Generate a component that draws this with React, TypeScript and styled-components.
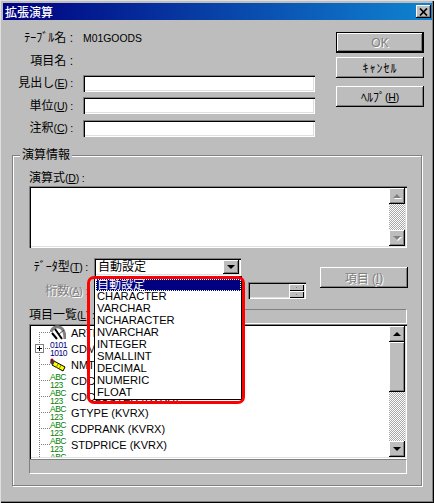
import React from 'react';
import styled, { createGlobalStyle, css } from 'styled-components';

const FACE = '#bdbdbd';

const GlobalStyle = createGlobalStyle`
	html, body {
		margin: 0;
		padding: 0;
		background: ${FACE};
	}
	body {
		font-family: "Liberation Sans", "Noto Sans CJK JP", sans-serif;
		font-size: 12px;
		color: #000;
	}
	* {
		box-sizing: border-box;
	}
`;

const sunken = css`
	box-shadow: inset 1px 1px 0 #808080, inset 2px 2px 0 #000, inset -1px -1px 0 #fff, inset -2px -2px 0 #dfdfdf;
`;
const raised = css`
	background: ${FACE};
	box-shadow: inset -1px -1px 0 #000, inset 1px 1px 0 #fff, inset -2px -2px 0 #808080;
`;
const disabledText = css`
	color: #808080;
	text-shadow: 1px 1px 0 #fff;
`;

const Dialog = styled.div`
	width: 434px;
	height: 503px;
	padding: 3px 2px 3px 3px;
	background: ${FACE};
	overflow: hidden;
	box-shadow: inset 1px 1px 0 #dfdfdf, inset -1px -1px 0 #000, inset -2px -2px 0 #808080;
`;

const TitleBar = styled.div`
	height: 17px;
	padding: 0 0 0 2px;
	display: flex;
	align-items: center;
	justify-content: space-between;
	background: linear-gradient(90deg, #000080 0%, #1084d0 100%);
	color: #fff;
	font-family: "Noto Sans CJK JP", sans-serif;
	font-weight: 500;
	font-size: 12px;
`;

const CloseButton = styled.div`
	${raised};
	width: 15px;
	height: 13px;
	margin-right: 1px;
	display: flex;
	align-items: center;
	justify-content: center;
`;

const TopSection = styled.div`
	height: 135px;
	display: flex;
`;

const Form = styled.div`
	width: 312px;
	padding-top: 7px;
	display: grid;
	grid-template-columns: 70px 232px;
	column-gap: 10px;
	grid-auto-rows: 22.5px;
	align-items: center;
`;

const FieldLabel = styled.div`
	text-align: right;
	white-space: nowrap;
	line-height: 14px;
`;

const Hotkey = styled.span`
	font-size: 10.5px;
	letter-spacing: -0.2px;
`;

const StaticValue = styled.div`
	font-size: 10.4px;
`;

const TextInput = styled.div`
	${sunken};
	height: 17px;
	background: #fff;
`;

const ButtonColumn = styled.div`
	margin-left: 21px;
	padding-top: 12px;
	width: 88px;
	display: flex;
	flex-direction: column;
`;

const PushButton = styled.div<{ $default?: boolean; $disabled?: boolean; $top?: number; $spacing?: number }>`
	${raised};
	height: 21px;
	margin-top: ${({ $top }) => $top ?? 0}px;
	letter-spacing: ${({ $spacing }) => $spacing ?? 0}px;
	display: flex;
	align-items: center;
	justify-content: center;
	white-space: nowrap;
	${({ $disabled }) => $disabled && disabledText};
	${({ $default }) =>
		$default &&
		css`
			box-shadow: inset 0 0 0 1px #000, inset -2px -2px 0 #000, inset 2px 2px 0 #fff, inset -3px -3px 0 #808080;
		`};
`;

const GroupBox = styled.div`
	position: relative;
	width: 410px;
	height: 331px;
	margin-left: 9px;
	padding: 14px 0 0 16px;
	border: 1px solid #808080;
	box-shadow: inset 1px 1px 0 #fff, 1px 1px 0 #fff;
`;

const GroupTitle = styled.div`
	position: absolute;
	top: -8px;
	left: 7px;
	padding: 0 2px;
	background: ${FACE};
	line-height: 15px;
`;

const SectionLabel = styled.div`
	height: 16px;
	line-height: 16px;
`;

const FormulaBox = styled.div`
	${sunken};
	width: 378px;
	height: 62px;
	padding: 2px;
	background: #fff;
	display: flex;
	justify-content: flex-end;
`;

const ScrollBar = styled.div`
	width: 16px;
	display: flex;
	flex-direction: column;
	flex-shrink: 0;
	background: repeating-conic-gradient(#fff 0 25%, #a8a8a8 0 50%) 0 0 / 2px 2px;
`;

const ScrollButton = styled.div`
	${raised};
	height: 16px;
	flex-shrink: 0;
	display: flex;
	align-items: center;
	justify-content: center;
`;

const ScrollThumb = styled.div`
	${raised};
	height: 50px;
	flex-shrink: 0;
`;

const ScrollTrack = styled.div`
	flex: 1;
`;

const Arrow = styled.span<{ $down?: boolean; $disabled?: boolean }>`
	width: 0;
	height: 0;
	border-left: 4px solid transparent;
	border-right: 4px solid transparent;
	${({ $down, $disabled }) => {
		const color = $disabled ? '#808080' : '#000';
		return $down ? `border-top: 4px solid ${color};` : `border-bottom: 4px solid ${color};`;
	}};
	${({ $disabled }) => $disabled && 'filter: drop-shadow(1px 1px 0 #fff);'};
`;

const TypeGrid = styled.div`
	margin-top: 10px;
	display: grid;
	grid-template-columns: 65px 154px 58px 14px 88px;
	grid-template-rows: 24px 27px;
`;

const GridLabel = styled.div<{ $disabled?: boolean; $row: number }>`
	grid-column: 1;
	grid-row: ${({ $row }) => $row};
	height: 18px;
	padding-right: 6px;
	line-height: 18px;
	text-align: right;
	white-space: nowrap;
	${({ $disabled }) => $disabled && disabledText};
`;

const ComboWrap = styled.div`
	position: relative;
	grid-column: 2;
	grid-row: 1;
	width: 147px;
	height: 18px;
`;

const ComboField = styled.div`
	${sunken};
	height: 18px;
	padding: 2px 2px 2px 4px;
	background: #fff;
	display: flex;
	align-items: center;
	justify-content: space-between;
	line-height: 14px;
`;

const ComboButton = styled(ScrollButton)`
	width: 16px;
	height: 14px;
`;

const DropList = styled.div`
	position: absolute;
	top: 18px;
	left: 0;
	width: 148px;
	height: 124px;
	padding: 2px 0 0 1px;
	background: #fff;
	border: 1px solid #000;
	z-index: 2;
`;

const DropItem = styled.div<{ $selected?: boolean }>`
	height: 12px;
	padding-left: 1px;
	font-size: 11.2px;
	line-height: 11px;
	white-space: nowrap;
	${({ $selected }) =>
		$selected &&
		css`
			background: #000080;
			color: #fff;
			outline: 1px dotted #fff;
			outline-offset: -1px;
			font-size: 12px;
			line-height: 12px;
		`};
`;

const Highlight = styled.div`
	position: absolute;
	top: 18px;
	left: -7px;
	width: 158px;
	height: 128px;
	border: 3px solid #ff0000;
	border-radius: 7px;
	z-index: 3;
`;

const SpinBox = styled.div`
	${sunken};
	grid-column: 3;
	grid-row: 2;
	height: 17px;
	padding: 2px 2px 1px;
	display: flex;
	flex-direction: column;
	align-items: flex-end;
`;

const SpinButton = styled.div`
	background: ${FACE};
	box-shadow: inset 1px 1px 0 #fff, inset -1px -1px 0 #000;
	width: 15px;
	height: 7px;
	display: flex;
	align-items: center;
	justify-content: center;
	&::after {
		content: '';
		width: 1px;
		height: 1px;
		background: #808080;
	}
`;

const ItemButton = styled(PushButton)`
	grid-column: 5;
	grid-row: 1 / 3;
`;

const ListHeader = styled.div`
	height: 15px;
	width: 378px;
	display: flex;
`;

const ListLabel = styled.div`
	line-height: 13px;
	width: 120px;
	white-space: nowrap;
`;

const HeaderStrip = styled.div`
	flex: 1;
	border-top: 1px solid #808080;
	border-right: 1px solid #fff;
	border-bottom: 1px solid #fff;
`;

const ListBox = styled.div`
	${sunken};
	width: 378px;
	height: 135px;
	padding: 2px;
	background: #fff;
	display: flex;
`;

const TreeBody = styled.div`
	position: relative;
	flex: 1;
	margin-top: -1px;
	overflow: hidden;
	&::before {
		content: '';
		position: absolute;
		left: 8px;
		top: 7px;
		bottom: 0;
		border-left: 1px dotted #808080;
	}
`;

const TreeRow = styled.div`
	position: relative;
	height: 16px;
	padding-left: 19px;
	display: flex;
	align-items: center;
	white-space: nowrap;
	font-size: 11px;
	&::before {
		content: '';
		position: absolute;
		left: 8px;
		top: 7px;
		width: 11px;
		border-top: 1px dotted #808080;
	}
`;

const IconSlot = styled.div`
	width: 16px;
	height: 16px;
	margin-right: 5px;
	flex-shrink: 0;
	display: flex;
	align-items: center;
	justify-content: center;
`;

const StackIcon = styled.div<{ $color: string }>`
	width: 16px;
	color: ${({ $color }) => $color};
	font-size: 8.5px;
	line-height: 8px;
	letter-spacing: -0.5px;
	white-space: nowrap;
`;

const Expander = styled.svg`
	position: absolute;
	left: 4px;
	top: 3px;
`;

const FooterStrip = styled.div`
	width: 378px;
	height: 15px;
	border: 1px solid #808080;
	border-right-color: #fff;
	border-bottom-color: #fff;
`;

const LinkIcon = () => (
	<svg width="16" height="16" viewBox="0 0 16 16" fill="none">
		<path d="M1 7C2 3 6 1 9 2C13 3 15 8 15 14" stroke="#808080" strokeWidth="3" />
		<path d="M5 4L12 14M2 8L7 14" stroke="#000" strokeWidth="2" />
		<path d="M9 9L14 5" stroke="#404040" strokeWidth="1" />
	</svg>
);

const CrayonIcon = () => (
	<svg width="16" height="16" viewBox="0 0 16 16" fill="none">
		<path d="M4 4L15 10L13 14L2 8Z" fill="#ffff00" stroke="#000" strokeWidth="1" />
		<path d="M1 2L5 4L3 8L0 6Z" fill="#404040" />
		<circle cx="2" cy="3" r="1.5" fill="#a00000" />
		<path d="M8 7L6 11M11 8L9 12" stroke="#808000" strokeWidth="1" />
	</svg>
);

const ItemIcon = ({ kind }: { kind: string }) => {
	if (kind === 'link') return <LinkIcon />;
	if (kind === 'crayon') return <CrayonIcon />;
	if (kind === 'binary') {
		return (
			<StackIcon $color="#000080">
				0101
				<br />
				1010
			</StackIcon>
		);
	}
	return (
		<StackIcon $color="#008000">
			ABC
			<br />
			123
		</StackIcon>
	);
};

const dataTypes = ['自動設定', 'CHARACTER', 'VARCHAR', 'NCHARACTER', 'NVARCHAR', 'INTEGER', 'SMALLINT', 'DECIMAL', 'NUMERIC', 'FLOAT'];

const treeItems = [
	{ kind: 'link', name: 'ARTNO' },
	{ kind: 'binary', name: 'CDMAKER', expandable: true },
	{ kind: 'crayon', name: 'NMTEXT' },
	{ kind: 'abc', name: 'CDCLASS' },
	{ kind: 'abc', name: 'CDCLUSTER (KVRX)' },
	{ kind: 'abc', name: 'GTYPE (KVRX)' },
	{ kind: 'abc', name: 'CDPRANK (KVRX)' },
	{ kind: 'abc', name: 'STDPRICE (KVRX)' },
	{ kind: 'abc', name: 'SALEPRICE (KVRX)' },
];

const Scroll = ({ disabled, thumb }: { disabled?: boolean; thumb?: boolean }) => (
	<ScrollBar>
		<ScrollButton>
			<Arrow $disabled={disabled} />
		</ScrollButton>
		{thumb && <ScrollThumb />}
		<ScrollTrack />
		<ScrollButton>
			<Arrow $down $disabled={disabled} />
		</ScrollButton>
	</ScrollBar>
);

export default function App() {
	return (
		<>
			<GlobalStyle />
			<Dialog>
				<TitleBar>
					拡張演算
					<CloseButton>
						<svg width="9" height="8" viewBox="0 0 9 8">
							<path d="M1 0.5L8 7.5M8 0.5L1 7.5" stroke="#000" strokeWidth="1.7" />
						</svg>
					</CloseButton>
				</TitleBar>

				<TopSection>
					<Form>
						<FieldLabel>ﾃｰﾌﾞﾙ名 :</FieldLabel>
						<StaticValue>M01GOODS</StaticValue>
						<FieldLabel>項目名 :</FieldLabel>
						<div />
						<FieldLabel>
							見出し
							<Hotkey>
								(<u>E</u>) :
							</Hotkey>
						</FieldLabel>
						<TextInput />
						<FieldLabel>
							単位
							<Hotkey>
								(<u>U</u>) :
							</Hotkey>
						</FieldLabel>
						<TextInput />
						<FieldLabel>
							注釈
							<Hotkey>
								(<u>C</u>) :
							</Hotkey>
						</FieldLabel>
						<TextInput />
					</Form>
					<ButtonColumn>
						<PushButton $default $disabled>
							OK
						</PushButton>
						<PushButton $top={4} $spacing={1}>
							ｷｬﾝｾﾙ
						</PushButton>
						<PushButton $top={8}>
							ﾍﾙﾌﾟ
							<Hotkey>
								(<u>H</u>)
							</Hotkey>
						</PushButton>
					</ButtonColumn>
				</TopSection>

				<GroupBox>
					<GroupTitle>演算情報</GroupTitle>
					<SectionLabel>
						演算式
						<Hotkey>
							(<u>D</u>) :
						</Hotkey>
					</SectionLabel>
					<FormulaBox>
						<Scroll disabled />
					</FormulaBox>

					<TypeGrid>
						<GridLabel $row={1}>
							ﾃﾞｰﾀ型
							<Hotkey>
								(<u>T</u>) :
							</Hotkey>
						</GridLabel>
						<ComboWrap>
							<ComboField>
								自動設定
								<ComboButton>
									<Arrow $down />
								</ComboButton>
							</ComboField>
							<DropList>
								{dataTypes.map((type, i) => (
									<DropItem key={type} $selected={i === 0}>
										{type}
									</DropItem>
								))}
							</DropList>
							<Highlight />
						</ComboWrap>
						<GridLabel $row={2} $disabled>
							桁数
							<Hotkey>
								(<u>A</u>) :
							</Hotkey>
						</GridLabel>
						<SpinBox>
							<SpinButton />
							<SpinButton />
						</SpinBox>
						<ItemButton $disabled $top={9}>
							項目 (<u>I</u>)
						</ItemButton>
					</TypeGrid>

					<ListHeader>
						<ListLabel>
							項目一覧
							<Hotkey>
								(<u>L</u>) :
							</Hotkey>
						</ListLabel>
						<HeaderStrip />
					</ListHeader>
					<ListBox>
						<TreeBody>
							{treeItems.map((item) => (
								<TreeRow key={item.name}>
									{item.expandable && (
										<Expander width="9" height="9" viewBox="0 0 9 9" shapeRendering="crispEdges">
											<rect x="0.5" y="0.5" width="8" height="8" fill="#fff" stroke="#808080" />
											<path d="M2 4.5H7M4.5 2V7" stroke="#000" />
										</Expander>
									)}
									<IconSlot>
										<ItemIcon kind={item.kind} />
									</IconSlot>
									{item.name}
								</TreeRow>
							))}
						</TreeBody>
						<Scroll thumb />
					</ListBox>
					<FooterStrip />
				</GroupBox>
			</Dialog>
		</>
	);
}
